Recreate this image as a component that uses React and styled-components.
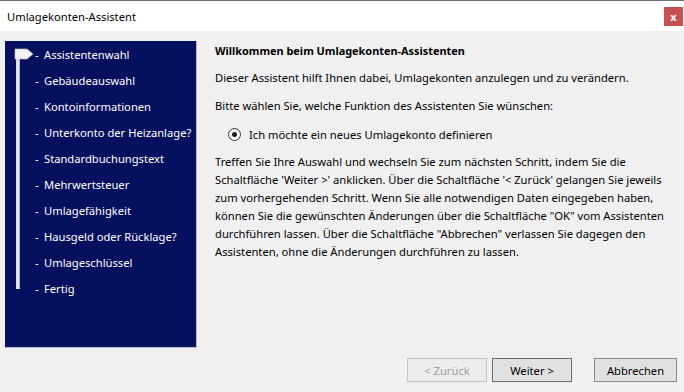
import React from "react";
import styled, { createGlobalStyle } from "styled-components";

const Global = createGlobalStyle`
  html, body { margin: 0; padding: 0; }
  body { font-family: "Noto Sans", "Open Sans", sans-serif; font-size: 11.2px; color: #000; background: #f0f0f0; }
`;

const Window = styled.div`
  width: 684px;
  height: 392px;
  display: flex;
  flex-direction: column;
  background: #f0f0f0;
  border-top: 1px solid #6e6e6e;
  box-sizing: border-box;
  overflow: hidden;
`;

const TitleBar = styled.div`
  height: 30px;
  background: #fff;
  display: flex;
  align-items: center;
  justify-content: space-between;
  padding: 0 1px 0 7px;
  flex-shrink: 0;
`;

const Title = styled.span`
  font-size: 11.2px;
  color: #000;
`;

const CloseButton = styled.div`
  width: 19px;
  height: 19px;
  background: #c75050;
  color: #fff;
  font-size: 11px;
  font-weight: bold;
  display: flex;
  align-items: center;
  justify-content: center;
  line-height: 1;
  margin-top: 1px;
`;

const Body = styled.div`
  flex: 1;
  display: flex;
  flex-direction: column;
  padding: 10px 7px 10px 5px;
`;

const Main = styled.div`
  display: flex;
  gap: 18px;
  height: 307px;
`;

const Sidebar = styled.div`
  width: 192px;
  background: #05105e;
  border-right: 1px solid #b4b8d0;
  border-bottom: 1px solid #b4b8d0;
  box-sizing: border-box;
  display: flex;
  flex-shrink: 0;
`;

const Track = styled.svg`
  width: 30px;
  height: 260px;
  flex-shrink: 0;
`;

const StepList = styled.ul`
  list-style: none;
  margin: 0;
  padding: 0;
`;

const Step = styled.li`
  height: 26px;
  display: flex;
  align-items: center;
  color: #fff;
  font-size: 11.2px;
  white-space: nowrap;
`;

const Dash = styled.span`
  width: 9px;
`;

const Content = styled.div`
  flex: 1;
  padding-top: 1px;
`;

const Heading = styled.div`
  font-weight: bold;
  font-size: 10.9px;
  height: 18px;
  line-height: 18px;
  margin-bottom: 9px;
`;

const Para = styled.p`
  margin: 0 0 ${(p) => p.$gap || 10}px 0;
  line-height: ${(p) => p.$lh || 18}px;
  max-width: 456px;
`;

const RadioRow = styled.label`
  display: flex;
  align-items: center;
  gap: 8px;
  margin: 0 0 10px 13px;
  height: 18px;
`;

const RadioCircle = styled.span`
  width: 11px;
  height: 11px;
  border: 1px solid #333;
  border-radius: 50%;
  background: #fff;
  display: flex;
  align-items: center;
  justify-content: center;
  &::after {
    content: "";
    width: 5px;
    height: 5px;
    border-radius: 50%;
    background: #1a1a1a;
  }
`;

const Footer = styled.div`
  margin-top: auto;
  display: flex;
  justify-content: flex-end;
  gap: 5px;
`;

const Button = styled.button`
  width: ${(p) => p.$w || 80}px;
  height: 24px;
  font-family: inherit;
  font-size: 11.2px;
  padding: 0;
  background: ${(p) => (p.disabled ? "#ececec" : "#e1e1e1")};
  color: ${(p) => (p.disabled ? "#a0a0a0" : "#000")};
  border: 1px solid ${(p) => (p.disabled ? "#c4c4c4" : p.$dark ? "#6a6a6a" : "#8a8a8a")};
  margin-left: ${(p) => p.$ml || 0}px;
`;

const steps = [
  "Assistentenwahl",
  "Gebäudeauswahl",
  "Kontoinformationen",
  "Unterkonto der Heizanlage?",
  "Standardbuchungstext",
  "Mehrwertsteuer",
  "Umlagefähigkeit",
  "Hausgeld oder Rücklage?",
  "Umlageschlüssel",
  "Fertig",
];

export default function App() {
  return (
    <>
      <Global />
      <Window>
        <TitleBar>
          <Title>Umlagekonten-Assistent</Title>
          <CloseButton>x</CloseButton>
        </TitleBar>
        <Body>
          <Main>
            <Sidebar>
              <Track viewBox="0 0 30 260">
                <rect x="11" y="17" width="4" height="231" fill="#e4e4e4" />
                <rect x="14" y="17" width="1" height="231" fill="#b8b8c8" />
                <polygon points="10,8 22,8 28,13 22,18 10,18" fill="#f2f2f2" stroke="#c8c8d0" strokeWidth="0.6" />
              </Track>
              <StepList>
                {steps.map((s) => (
                  <Step key={s}>
                    <Dash>-</Dash>
                    {s}
                  </Step>
                ))}
              </StepList>
            </Sidebar>
            <Content>
              <Heading>Willkommen beim Umlagekonten-Assistenten</Heading>
              <Para>Dieser Assistent hilft Ihnen dabei, Umlagekonten anzulegen und zu verändern.</Para>
              <Para>Bitte wählen Sie, welche Funktion des Assistenten Sie wünschen:</Para>
              <RadioRow>
                <RadioCircle />
                Ich möchte ein neues Umlagekonto definieren
              </RadioRow>
              <Para>
                Treffen Sie Ihre Auswahl und wechseln Sie zum nächsten Schritt, indem Sie die Schaltfläche 'Weiter &gt;' anklicken. Über die Schaltfläche '&lt; Zurück' gelangen Sie jeweils zum vorhergehenden Schritt. Wenn Sie alle notwendigen Daten eingegeben haben, können Sie die gewünschten Änderungen über die Schaltfläche "OK" vom Assistenten durchführen lassen. Über die Schaltfläche "Abbrechen" verlassen Sie dagegen den Assistenten, ohne die Änderungen durchführen zu lassen.
              </Para>
            </Content>
          </Main>
          <Footer>
            <Button disabled>&lt; Zurück</Button>
            <Button $dark>Weiter &gt;</Button>
            <Button $w={83} $ml={17}>Abbrechen</Button>
          </Footer>
        </Body>
      </Window>
    </>
  );
}
